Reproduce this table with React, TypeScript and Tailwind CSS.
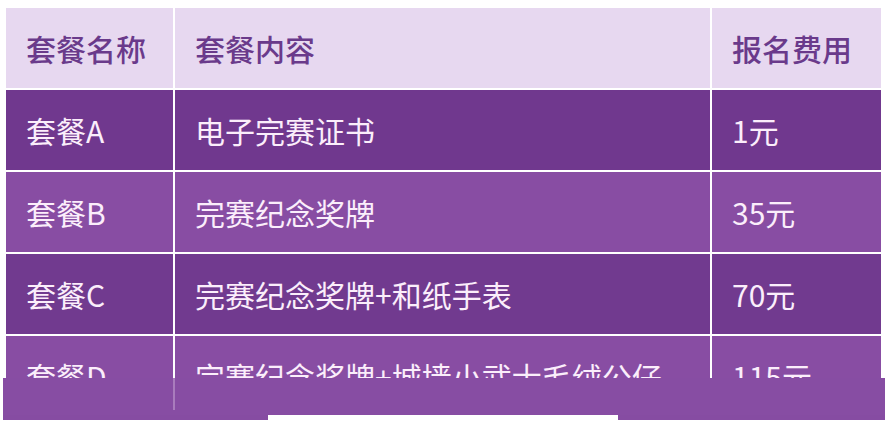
import React from "react";

const ROWS = [
  { name: "套餐A", content: "电子完赛证书", fee: "1元", bg: "bg-[#70388e]" },
  { name: "套餐B", content: "完赛纪念奖牌", fee: "35元", bg: "bg-[#884da3]" },
  { name: "套餐C", content: "完赛纪念奖牌+和纸手表", fee: "70元", bg: "bg-[#713a8f]" },
  { name: "套餐D", content: "完赛纪念奖牌+城墙小武士毛绒公仔", fee: "115元", bg: "bg-[#884da3]" },
];

const font = "font-['Noto_Sans_CJK_SC','Noto_Sans',sans-serif]";

export default function App() {
  return (
    <div className={`w-[888px] h-[424px] bg-white overflow-hidden ${font}`}>
      <div className="pt-[8px] pl-[6px]">
        {/* table, cut off at the bottom */}
        <div className="w-[875px] h-[370px] overflow-hidden">
          <div className="grid grid-cols-[167px_535px_169px] gap-[2px] bg-white">
            {/* header */}
            {["套餐名称", "套餐内容", "报名费用"].map((h) => (
              <div
                key={h}
                className="h-[80px] bg-[#e7d8f0] flex items-center pl-[20px] text-[30px] font-medium text-[#6a3a8b] leading-none"
              >
                {h}
              </div>
            ))}
            {ROWS.map((r) =>
              [r.name, r.content, r.fee].map((c, i) => (
                <div
                  key={r.name + i}
                  className={`h-[80px] ${r.bg} flex items-center pl-[20px] text-[30px] text-[#fbeefb] leading-none`}
                >
                  {c}
                </div>
              ))
            )}
          </div>
        </div>
      </div>

      {/* smeared band below */}
      <div className="ml-[3px] w-[882px] h-[37px] bg-[#874da3] flex">
        <div className="w-[170px]" />
        <div className="w-[2px] h-[32px] bg-[#a97cbd]" />
        <div className="flex-1" />
      </div>
      <div className="ml-[3px] w-[882px] h-[5px] flex">
        <div className="w-[265px] bg-[#864ca2]" />
        <div className="w-[350px] bg-white" />
        <div className="flex-1 bg-[#864ca2]" />
      </div>
    </div>
  );
}
